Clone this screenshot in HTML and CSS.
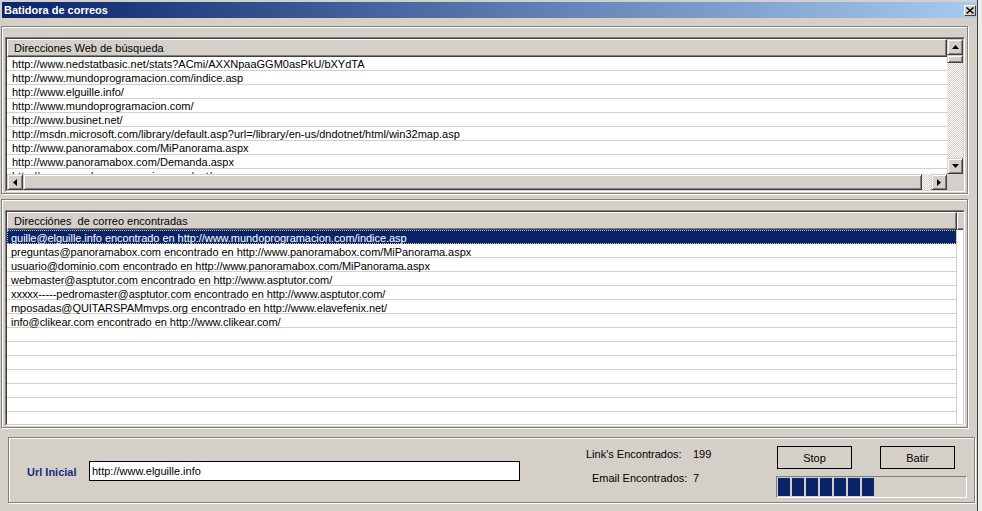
FILE: index.html
```html
<!DOCTYPE html>
<html lang="es">
<head>
  <meta charset="UTF-8" />
  <title>Batidora de correos</title>
  <link rel="stylesheet" href="styles.css">
</head>
<body>
  <div class="window">
    <div class="titlebar">
      <span class="title">Batidora de correos</span>
      <span class="close-btn">
        <svg width="8" height="7" viewBox="0 0 8 7"><path d="M0.5 0.5 L7.5 6.5 M7.5 0.5 L0.5 6.5" stroke="#000" stroke-width="1.4"/></svg>
      </span>
    </div>

    <!-- urls to crawl -->
    <div class="group group-urls">
      <div class="listview lv-urls">
        <div class="lv-inner lv-scroll">
          <div class="lv-body">
            <div class="lv-header"><div class="lv-col">Direcciones Web de búsqueda</div></div>
            <div class="lv-row">http://www.nedstatbasic.net/stats?ACmi/AXXNpaaGGM0asPkU/bXYdTA</div>
            <div class="lv-row">http://www.mundoprogramacion.com/indice.asp</div>
            <div class="lv-row">http://www.elguille.info/</div>
            <div class="lv-row">http://www.mundoprogramacion.com/</div>
            <div class="lv-row">http://www.businet.net/</div>
            <div class="lv-row">http://msdn.microsoft.com/library/default.asp?url=/library/en-us/dndotnet/html/win32map.asp</div>
            <div class="lv-row">http://www.panoramabox.com/MiPanorama.aspx</div>
            <div class="lv-row">http://www.panoramabox.com/Demanda.aspx</div>
            <div class="lv-row">http://www.mundoprogramacion.com/net/</div>
          </div>
          <div class="vscroll">
            <div class="sb-btn"><svg width="7" height="4" viewBox="0 0 7 4"><polygon points="3.5,0 7,4 0,4" fill="#000"/></svg></div>
            <div class="sb-thumb v-thumb"></div>
            <div class="sb-track"></div>
            <div class="sb-btn"><svg width="7" height="4" viewBox="0 0 7 4"><polygon points="0,0 7,0 3.5,4" fill="#000"/></svg></div>
          </div>
          <div class="hscroll">
            <div class="sb-btn"><svg width="4" height="7" viewBox="0 0 4 7"><polygon points="4,0 4,7 0,3.5" fill="#000"/></svg></div>
            <div class="sb-thumb h-thumb"></div>
            <div class="sb-track"></div>
            <div class="sb-btn"><svg width="4" height="7" viewBox="0 0 4 7"><polygon points="0,0 4,3.5 0,7" fill="#000"/></svg></div>
          </div>
          <div class="sb-corner"></div>
        </div>
      </div>
    </div>

    <!-- found addresses -->
    <div class="group group-mails">
      <div class="listview lv-mails">
        <div class="lv-inner">
          <div class="lv-header">
            <div class="lv-col lv-col-main">Direcciónes&nbsp; de correo encontradas</div>
            <div class="lv-col lv-col-fill"></div>
          </div>
          <div class="lv-row"><div class="lv-cell selected">guille@elguille.info encontrado en http://www.mundoprogramacion.com/indice.asp</div></div>
          <div class="lv-row"><div class="lv-cell">preguntas@panoramabox.com encontrado en http://www.panoramabox.com/MiPanorama.aspx</div></div>
          <div class="lv-row"><div class="lv-cell">usuario@dominio.com encontrado en http://www.panoramabox.com/MiPanorama.aspx</div></div>
          <div class="lv-row"><div class="lv-cell">webmaster@asptutor.com encontrado en http://www.asptutor.com/</div></div>
          <div class="lv-row"><div class="lv-cell">xxxxx-----pedromaster@asptutor.com encontrado en http://www.asptutor.com/</div></div>
          <div class="lv-row"><div class="lv-cell">mposadas@QUITARSPAMmvps.org encontrado en http://www.elavefenix.net/</div></div>
          <div class="lv-row"><div class="lv-cell">info@clikear.com encontrado en http://www.clikear.com/</div></div>
          <div class="lv-row"><div class="lv-cell"></div></div>
          <div class="lv-row"><div class="lv-cell"></div></div>
          <div class="lv-row"><div class="lv-cell"></div></div>
          <div class="lv-row"><div class="lv-cell"></div></div>
          <div class="lv-row"><div class="lv-cell"></div></div>
          <div class="lv-row"><div class="lv-cell"></div></div>
          <div class="lv-row"><div class="lv-cell"></div></div>
        </div>
      </div>
    </div>

    <!-- controls -->
    <div class="group group-controls">
      <label class="url-label" for="urlInicial">Url Inicial</label>
      <input id="urlInicial" class="url-input" type="text" value="http://www.elguille.info" />

      <div class="stats">
        <div class="stat-label">Link's Encontrados:</div>
        <div class="stat-value">199</div>
        <div class="stat-label stat-label-2">Email Encontrados:</div>
        <div class="stat-value">7</div>
      </div>

      <div class="actions">
        <div class="button-row">
          <button id="stop">Stop</button>
          <button id="batir">Batir</button>
        </div>
        <div class="progress">
          <div class="block"></div><div class="block"></div><div class="block"></div><div class="block"></div>
          <div class="block"></div><div class="block"></div><div class="block"></div>
        </div>
      </div>
    </div>
  </div>
</body>
</html>
```

FILE: styles.css
```css
* {
  box-sizing: border-box;
}
body {
  margin: 0;
  background: #eeede9;
  font-family: "Liberation Sans", Arial, sans-serif;
  font-size: 11px;
  color: #000;
}
.window {
  width: 978px;
  height: 511px;
  background: #d4d0c8;
  border-right: 1px solid #404040;
  display: flex;
  flex-direction: column;
  overflow: hidden;
}
.titlebar {
  height: 16px;
  margin: 2px 0 0 2px;
  padding: 0 1px 0 2px;
  background: linear-gradient(to right, #0a246a, #a6caf0);
  display: flex;
  align-items: center;
  justify-content: space-between;
}
.title {
  color: #fff;
  font-weight: bold;
  font-size: 11px;
}
.close-btn {
  width: 12px;
  height: 11px;
  background: #d4d0c8;
  border: 1px solid;
  border-color: #fff #404040 #404040 #fff;
  display: flex;
  align-items: center;
  justify-content: center;
}

/* etched group frames */
.group {
  border: 1px solid #808080;
  box-shadow: inset 1px 1px #fff, 1px 1px #fff;
  margin-left: 1px;
  width: 967px;
}
.group-urls {
  margin-top: 8px;
  height: 168px;
  padding: 10px 0 0 3px;
}
.group-mails {
  margin-top: 5px;
  height: 229px;
  padding: 10px 0 0 3px;
}
.group-controls {
  margin-top: 9px;
  margin-left: 8px;
  height: 66px;
  display: flex;
  align-items: flex-start;
}

/* listviews */
.listview {
  width: 960px;
  border: 1px solid;
  border-color: #808080 #fff #fff #808080;
}
.lv-urls {
  height: 155px;
}
.lv-mails {
  height: 216px;
}
.lv-inner {
  height: 100%;
  background: #fff;
  border: 1px solid;
  border-color: #404040 #d4d0c8 #d4d0c8 #404040;
  overflow: hidden;
}
.lv-scroll {
  display: grid;
  grid-template-columns: 1fr 16px;
  grid-template-rows: 1fr 16px;
}
.lv-body {
  overflow: hidden;
}
.lv-header {
  height: 18px;
  display: flex;
}
.lv-col {
  flex: 1;
  background: #d4d0c8;
  border: 1px solid;
  border-color: #fff #404040 #404040 #fff;
  box-shadow: inset -1px -1px #808080;
  padding: 1px 0 0 6px;
  line-height: 15px;
  white-space: nowrap;
}
.lv-col-main {
  flex: none;
  width: 950px;
}
.lv-row {
  height: 14px;
  padding: 2px 0 0 5px;
  line-height: 11px;
  border-bottom: 1px solid #d4d0c8;
  white-space: nowrap;
}
.lv-mails .lv-row {
  padding: 0;
  border-bottom: none;
  display: flex;
}
.lv-cell {
  width: 950px;
  height: 14px;
  padding: 3px 0 0 4px;
  line-height: 10px;
  border-right: 1px solid #d4d0c8;
  border-bottom: 1px solid #d4d0c8;
  letter-spacing: -0.05px;
}
.lv-cell.selected {
  background: #0a246a;
  border-bottom-color: #0a246a;
  color: #fff;
  outline: 1px dotted #c8c4b8;
  outline-offset: -1px;
}

/* scrollbars */
.vscroll {
  display: flex;
  flex-direction: column;
}
.hscroll {
  display: flex;
}
.sb-btn,
.sb-thumb {
  background: #d4d0c8;
  border: 1px solid;
  border-color: #d4d0c8 #404040 #404040 #d4d0c8;
  box-shadow: inset 1px 1px #fff, inset -1px -1px #808080;
}
.sb-btn {
  width: 16px;
  height: 16px;
  flex: none;
  display: flex;
  align-items: center;
  justify-content: center;
}
.v-thumb {
  height: 8px;
}
.h-thumb {
  width: 899px;
}
.sb-track {
  flex: 1;
  background: repeating-conic-gradient(#d4d0c8 0 25%, #fff 0 50%) 0 0 / 2px 2px;
}
.sb-corner {
  background: #d4d0c8;
}

/* bottom controls */
.url-label {
  width: 62px;
  margin: 28px 0 0 18px;
  font-weight: bold;
  color: #1c2a7c;
  line-height: 13px;
}
.url-input {
  width: 431px;
  height: 20px;
  margin-top: 23px;
  padding: 0 2px;
  border: 1px solid #000;
  font: 11px "Liberation Sans", Arial, sans-serif;
  outline: none;
}
.stats {
  width: 190px;
  margin: 10px 0 0 66px;
  display: grid;
  grid-template-columns: 107px auto;
  row-gap: 11px;
  line-height: 13px;
}
.stat-label-2 {
  padding-left: 6px;
}
.actions {
  margin-top: 8px;
  width: 191px;
}
.button-row {
  display: flex;
  gap: 28px;
  padding-left: 1px;
}
.button-row button {
  width: 75px;
  height: 23px;
  background: #d4d0c8;
  border: 1px solid #000;
  font: 11px "Liberation Sans", Arial, sans-serif;
  color: #000;
  padding: 0;
}
.progress {
  margin-top: 7px;
  height: 22px;
  border: 1px solid;
  border-color: #808080 #fff #fff #808080;
  padding: 1px;
  display: flex;
  gap: 2px;
}
.block {
  width: 12px;
  height: 18px;
  background: #0a246a;
}
```
